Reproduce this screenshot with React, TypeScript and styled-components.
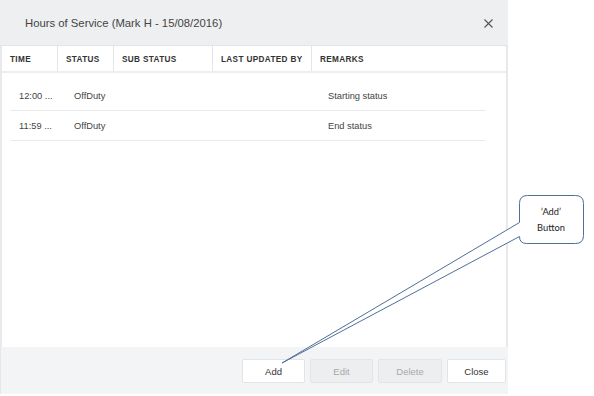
import React from "react";
import styled, { createGlobalStyle } from "styled-components";

const GlobalStyle = createGlobalStyle`
  html, body {
    margin: 0;
    padding: 0;
    width: 594px;
    height: 396px;
    overflow: hidden;
    background: #ffffff;
    font-family: "Liberation Sans", Arial, sans-serif;
  }
  * { box-sizing: border-box; }
`;

const Page = styled.div`
  position: relative;
  width: 594px;
  height: 396px;
  display: flex;
  align-items: flex-start;
  background: #ffffff;
`;

const Dialog = styled.div`
  width: 508px;
  height: 394px;
  display: flex;
  flex-direction: column;
  background: #e8e9ec;
`;

const Header = styled.div`
  height: 46px;
  flex: none;
  display: flex;
  align-items: center;
  justify-content: space-between;
  padding: 1px 14px 0 25px;
  background: #eeeff1;
  border-bottom: 1px solid #e3e4e7;
`;

const Title = styled.div`
  font-size: 11.3px;
  color: #444;
`;

const CloseX = styled.button`
  width: 11px;
  height: 11px;
  padding: 0;
  border: none;
  background: transparent;
  display: flex;
  align-items: center;
  justify-content: center;
`;

const Body = styled.div`
  flex: 1;
  margin: 0 2px;
  background: #ffffff;
  display: flex;
  flex-direction: column;
`;

const HeadRow = styled.div`
  display: grid;
  grid-template-columns: 56px 56px 99px 99px 1fr;
  height: 27px;
  border-bottom: 2px solid #eceef0;
`;

const HeadCell = styled.div<{ $last?: boolean }>`
  display: flex;
  align-items: center;
  padding: 2px 0 0 8px;
  border-right: ${(p) => (p.$last ? "none" : "1px solid #e4e5e8")};
  font-size: 8.2px;
  font-weight: bold;
  letter-spacing: 0.35px;
  color: #333;
`;

const Rows = styled.div`
  padding: 8px 20px 0 8px;
  display: flex;
  flex-direction: column;
`;

const Row = styled.div`
  display: grid;
  grid-template-columns: 55px 254px 1fr;
  height: 30px;
  border-bottom: 1px solid #e9eaed;
  align-items: center;
`;

const Cell = styled.div`
  padding-left: 9px;
  font-size: 9.3px;
  color: #444;
  white-space: nowrap;
`;

const Footer = styled.div`
  height: 47px;
  flex: none;
  display: flex;
  justify-content: flex-end;
  align-items: flex-start;
  gap: 5px;
  padding: 12px 2px 0 0;
  background: #f3f4f6;
  border-left: 1px solid #e6e7ea;
`;

const Button = styled.button<{ $w: number; $disabled?: boolean }>`
  width: ${(p) => p.$w}px;
  height: 24px;
  padding: 0;
  border: 1px solid #e3e4e7;
  border-radius: 2px;
  background: ${(p) => (p.$disabled ? "#eceef0" : "#ffffff")};
  color: ${(p) => (p.$disabled ? "#a9a9a9" : "#333")};
  font-family: "Liberation Sans", Arial, sans-serif;
  font-size: 9.5px;
`;

const Annotation = styled.svg`
  position: absolute;
  left: 0;
  top: 0;
  width: 594px;
  height: 396px;
  pointer-events: none;
`;

const CalloutText = styled.div`
  position: absolute;
  left: 519px;
  top: 204px;
  width: 64px;
  text-align: center;
  font-family: Lato, "Open Sans", sans-serif;
  font-size: 9.3px;
  line-height: 16px;
  color: #222;
`;

const columns = ["TIME", "STATUS", "SUB STATUS", "LAST UPDATED BY", "REMARKS"];

const data = [
  { time: "12:00 ...", status: "OffDuty", remarks: "Starting status" },
  { time: "11:59 ...", status: "OffDuty", remarks: "End status" },
];

export default function App() {
  return (
    <>
      <GlobalStyle />
      <Page>
        <Dialog>
          <Header>
            <Title>Hours of Service (Mark H - 15/08/2016)</Title>
            <CloseX aria-label="close">
              <svg width="9" height="9" viewBox="0 0 9 9">
                <path d="M0.5 0.5 L8.5 8.5 M8.5 0.5 L0.5 8.5" stroke="#555" strokeWidth="1.1" fill="none" />
              </svg>
            </CloseX>
          </Header>
          <Body>
            <HeadRow>
              {columns.map((c, i) => (
                <HeadCell key={c} $last={i === columns.length - 1}>
                  {c}
                </HeadCell>
              ))}
            </HeadRow>
            <Rows>
              {data.map((r) => (
                <Row key={r.remarks}>
                  <Cell>{r.time}</Cell>
                  <Cell>{r.status}</Cell>
                  <Cell>{r.remarks}</Cell>
                </Row>
              ))}
            </Rows>
          </Body>
          <Footer>
            <Button $w={63}>Add</Button>
            <Button $w={63} $disabled>Edit</Button>
            <Button $w={64} $disabled>Delete</Button>
            <Button $w={59}>Close</Button>
          </Footer>
        </Dialog>
        <Annotation viewBox="0 0 594 396">
          <path
            d="M527.5 195.5 H575.5 Q583.5 195.5 583.5 203.5 V235.5 Q583.5 243.5 575.5 243.5 H526.5 Q519.5 243.5 519.5 236.5 L282 363 L519.5 222.5 V203.5 Q519.5 195.5 527.5 195.5 Z"
            fill="#ffffff"
            stroke="#4f6f98"
            strokeWidth="1"
          />
        </Annotation>
        <CalloutText>
          ‘Add’
          <br />
          Button
        </CalloutText>
      </Page>
    </>
  );
}
